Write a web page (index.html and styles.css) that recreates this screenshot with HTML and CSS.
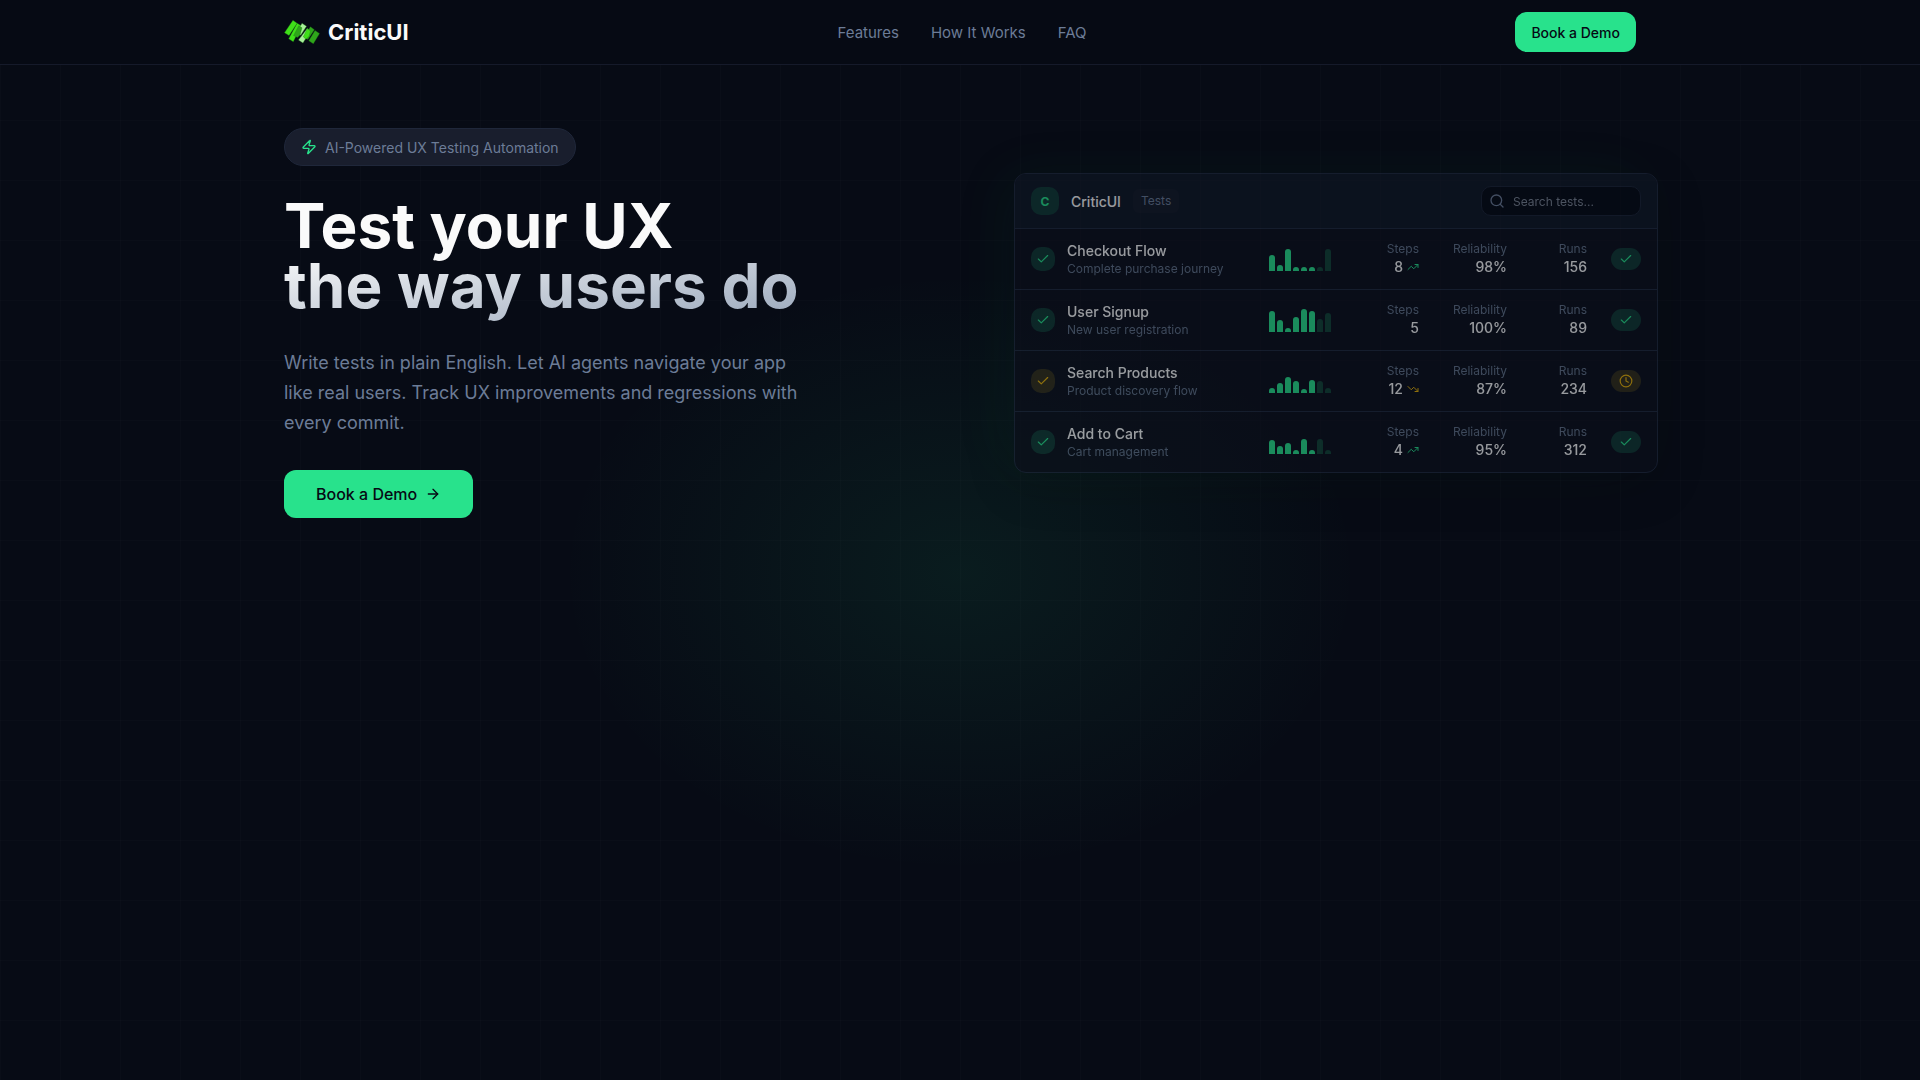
FILE: index.html
```html
<!DOCTYPE html>
<html lang="en">
<head>
<meta charset="utf-8">
<meta name="viewport" content="width=device-width, initial-scale=1">
<title>CriticUI</title>
<link rel="stylesheet" href="styles.css">
</head>
<body>
<svg class="sprite" aria-hidden="true">
  <symbol id="check" viewBox="0 0 24 24"><path d="M20 6 9 17l-5-5"/></symbol>
  <symbol id="clock" viewBox="0 0 24 24"><circle cx="12" cy="12" r="10"/><path d="M12 6v6l4 2"/></symbol>
  <symbol id="up" viewBox="0 0 24 24"><path d="m22 7-8.500 8.500-5-5L2 17"/><path d="M16 7h6v6"/></symbol>
  <symbol id="down" viewBox="0 0 24 24"><path d="m22 17-8.500-8.500-5 5L2 7"/><path d="M16 17h6v-6"/></symbol>
  <symbol id="search" viewBox="0 0 24 24"><circle cx="11" cy="11" r="8"/><path d="m21 21-4.300-4.300"/></symbol>
  <symbol id="arrow" viewBox="0 0 24 24"><path d="M5 12h14"/><path d="m12 5 7 7-7 7"/></symbol>
  <symbol id="zap" viewBox="0 0 24 24"><path d="M4 14a1 1 0 0 1-.78-1.630l9.900-10.200a.5.5 0 0 1 .86.46l-1.920 6.020A1 1 0 0 0 13 10h7a1 1 0 0 1 .78 1.630l-9.900 10.200a.5.5 0 0 1-.86-.46l1.920-6.020A1 1 0 0 0 11 14z"/></symbol>
</svg>

<header class="site-header">
  <div class="container header-inner">
    <a class="brand" href="#">
      <svg class="brand-mark" viewBox="0 0 108 74" aria-hidden="true">
        <g stroke="#1d7a16" stroke-width="1" stroke-linejoin="round">
          <path fill="#3fe019" d="M39 10 52 18 27 67 13 58z"/>
          <path fill="#3fe019" d="M26 1 39 10 14 48 0 39z"/>
          <path fill="#a8f09a" d="M70 26 80 34 57 71 43 62z"/>
          <path fill="#a8f09a" d="M54 10 68 19 50 47 38 38z"/>
          <path fill="#2fa51b" d="M44 18 54 24 48 46 40 54 28 48z"/>
          <path fill="#2fa51b" d="M80 21 92 30 72 60 60 52z"/>
          <path fill="#3fe019" d="M70 26 80 34 76 50 66 59 58 52z"/>
          <path fill="#2fa51b" d="M94 32 108 42 89 73 75 64z"/>
        </g>
      </svg>
      <span>CriticUI</span>
    </a>
    <nav class="nav" aria-label="Main">
      <a href="#features">Features</a>
      <a href="#how">How It Works</a>
      <a href="#faq">FAQ</a>
    </nav>
    <button class="btn btn-small" type="button">Book a Demo</button>
  </div>
</header>

<main class="hero">
  <div class="container hero-grid">
    <section class="intro">
      <p class="pill"><svg class="icon"><use href="#zap"/></svg>AI-Powered UX Testing Automation</p>
      <h1>Test your UX<br><span class="fade">the way users do</span></h1>
      <p class="lead">Write tests in plain English. Let AI agents navigate your app like real users. Track UX improvements and regressions with every commit.</p>
      <button class="btn btn-large" type="button">Book a Demo<svg class="icon"><use href="#arrow"/></svg></button>
    </section>

    <section class="preview" aria-label="Test overview">
      <div class="preview-head">
        <span class="avatar">C</span>
        <strong>CriticUI</strong>
        <span class="tag">Tests</span>
        <label class="search">
          <svg class="icon" aria-hidden="true"><use href="#search"/></svg>
          <input type="text" placeholder="Search tests..." aria-label="Search tests">
        </label>
      </div>
      <ul class="tests">
        <li class="test">
          <div class="name"><span class="state"><svg class="icon"><use href="#check"/></svg></span><div><h2>Checkout Flow</h2><p>Complete purchase journey</p></div></div>
          <div class="spark"><i style="height:16px"></i><i style="height:6px"></i><i style="height:22px"></i><i style="height:4px"></i><i style="height:4px"></i><i style="height:4px"></i><i style="height:4px"></i><i style="height:22px"></i></div>
          <dl><dt>Steps</dt><dd>8<svg class="icon trend"><use href="#up"/></svg></dd></dl>
          <dl><dt>Reliability</dt><dd>98%</dd></dl>
          <dl><dt>Runs</dt><dd>156</dd></dl>
          <span class="result"><svg class="icon"><use href="#check"/></svg></span>
        </li>
        <li class="test">
          <div class="name"><span class="state"><svg class="icon"><use href="#check"/></svg></span><div><h2>User Signup</h2><p>New user registration</p></div></div>
          <div class="spark"><i style="height:21px"></i><i style="height:12px"></i><i style="height:4px"></i><i style="height:15px"></i><i style="height:23px"></i><i style="height:21px"></i><i style="height:13px"></i><i style="height:19px"></i></div>
          <dl><dt>Steps</dt><dd>5</dd></dl>
          <dl><dt>Reliability</dt><dd>100%</dd></dl>
          <dl><dt>Runs</dt><dd>89</dd></dl>
          <span class="result"><svg class="icon"><use href="#check"/></svg></span>
        </li>
        <li class="test warn">
          <div class="name"><span class="state"><svg class="icon"><use href="#check"/></svg></span><div><h2>Search Products</h2><p>Product discovery flow</p></div></div>
          <div class="spark"><i style="height:5px"></i><i style="height:10px"></i><i style="height:16px"></i><i style="height:12px"></i><i style="height:4px"></i><i style="height:13px"></i><i style="height:12px"></i><i style="height:5px"></i></div>
          <dl><dt>Steps</dt><dd>12<svg class="icon trend"><use href="#down"/></svg></dd></dl>
          <dl><dt>Reliability</dt><dd>87%</dd></dl>
          <dl><dt>Runs</dt><dd>234</dd></dl>
          <span class="result"><svg class="icon"><use href="#clock"/></svg></span>
        </li>
        <li class="test">
          <div class="name"><span class="state"><svg class="icon"><use href="#check"/></svg></span><div><h2>Add to Cart</h2><p>Cart management</p></div></div>
          <div class="spark"><i style="height:14px"></i><i style="height:8px"></i><i style="height:11px"></i><i style="height:4px"></i><i style="height:15px"></i><i style="height:4px"></i><i style="height:15px"></i><i style="height:4px"></i></div>
          <dl><dt>Steps</dt><dd>4<svg class="icon trend"><use href="#up"/></svg></dd></dl>
          <dl><dt>Reliability</dt><dd>95%</dd></dl>
          <dl><dt>Runs</dt><dd>312</dd></dl>
          <span class="result"><svg class="icon"><use href="#check"/></svg></span>
        </li>
      </ul>
    </section>
  </div>
</main>
</body>
</html>
```
FILE: styles.css
```css
:root {
  --bg: #060a14;
  --green: #28e28c;
  --amber: #eab308;
  --muted: #6c7c97;
  --line: #151a2a;
}

* { box-sizing: border-box; margin: 0; padding: 0; }

body {
  min-height: 100vh;
  display: flex;
  flex-direction: column;
  background: var(--bg);
  color: #fafafa;
  font-family: Inter, "Open Sans", sans-serif;
}

a { color: inherit; text-decoration: none; }
button, input { font: inherit; }

.sprite { display: none; }

.icon {
  width: 16px;
  height: 16px;
  flex: none;
  fill: none;
  stroke: currentColor;
  stroke-width: 2;
  stroke-linecap: round;
  stroke-linejoin: round;
}

.container {
  width: 100%;
  max-width: 1400px;
  margin: 0 auto;
  padding: 0 24px;
}

.site-header { border-bottom: 1px solid var(--line); }

.header-inner {
  display: flex;
  align-items: center;
  justify-content: space-between;
  height: 64px;
}

.brand {
  display: flex;
  align-items: center;
  gap: 8px;
  font-size: 22px;
  line-height: 28px;
  font-weight: 700;
}

.brand-mark { width: 36px; height: 24px; }

.nav { display: flex; gap: 32px; color: var(--muted); font-size: 15px; }

.btn {
  display: inline-flex;
  align-items: center;
  justify-content: center;
  gap: 8px;
  border: 0;
  border-radius: 12px;
  background: var(--green);
  color: #060a14;
  cursor: pointer;
}

.btn-small { height: 40px; padding: 0 16px; font-size: 14px; font-weight: 500; }
.btn-large { height: 48px; padding: 0 32px; font-size: 16px; font-weight: 500; }

.hero {
  flex: 1;
  padding: 63px 0;
  background:
    radial-gradient(ellipse 400px 300px at 50% 50%, rgba(40, 226, 140, 0.08), transparent),
    linear-gradient(to right, rgba(255, 255, 255, 0.012) 1px, transparent 1px) 0 0 / 60px 60px,
    linear-gradient(to bottom, rgba(255, 255, 255, 0.012) 1px, transparent 1px) 0 55px / 60px 60px,
    #070b15;
}

.hero-grid {
  display: grid;
  grid-template-columns: 1fr 1fr;
  gap: 64px;
  align-items: center;
}

.pill {
  display: flex;
  align-items: center;
  gap: 8px;
  width: fit-content;
  height: 38px;
  padding: 0 16px;
  border: 1px solid #1f273a;
  border-radius: 20px;
  background: #191e2d;
  color: var(--muted);
  font-size: 14px;
}

.pill .icon { color: var(--green); }

h1 { margin-top: 30px; font-size: 62px; line-height: 60px; font-weight: 700; }

.fade {
  padding-bottom: 8px;
  background: linear-gradient(to bottom right, #fafafa, #94a3b8);
  background-clip: text;
  color: transparent;
}

.lead {
  max-width: 528px;
  margin: 32px 0;
  color: var(--muted);
  font-size: 18px;
  line-height: 30px;
}

.intro .btn { display: flex; }

.preview {
  margin: 0 -22px 0 22px;
  border: 1px solid #202a3f;
  border-radius: 12px;
  background: #0c101c;
  box-shadow: 0 12px 50px rgba(0, 0, 0, 0.3), -16px -4px 60px rgba(40, 226, 140, 0.08);
  opacity: 0.6;
  overflow: hidden;
}

.preview-head {
  display: flex;
  align-items: center;
  gap: 12px;
  height: 55px;
  padding: 0 16px;
  border-bottom: 1px solid #202a3f;
  background: #101826;
  font-size: 14px;
}

.preview-head strong { font-weight: 500; }

.avatar {
  display: grid;
  place-items: center;
  width: 28px;
  height: 28px;
  border-radius: 10px;
  background: #123b36;
  color: var(--green);
  font-size: 12px;
  font-weight: 700;
}

.tag {
  padding: 4px 8px;
  border-radius: 6px;
  background: #151b29;
  color: var(--muted);
  font-size: 12px;
  line-height: 16px;
}

.search {
  display: flex;
  align-items: center;
  gap: 8px;
  width: 160px;
  height: 30px;
  margin-left: auto;
  padding: 0 7px;
  border: 1px solid #1c2436;
  border-radius: 10px;
  background: #060a14;
  color: var(--muted);
  font-size: 12px;
}

.search input { width: 100%; min-width: 0; border: 0; outline: 0; background: none; color: #fafafa; }
.search input::placeholder { color: #7c8594; }

.tests { list-style: none; }

.test {
  display: grid;
  grid-template-columns: 1fr 64px 64px 64px 56px 30px;
  gap: 24px;
  align-items: center;
  height: 61px;
  padding: 0 16px;
  border-bottom: 1px solid #202a3f;
  --tone: var(--green);
  --tone-bg: #113a34;
}

.test:last-child { height: 60px; border-bottom: 0; }
.warn { --tone: var(--amber); --tone-bg: #34301c; }

.name { display: flex; align-items: center; gap: 12px; }

.state, .result {
  display: grid;
  place-items: center;
  width: 24px;
  height: 24px;
  border-radius: 10px;
  background: var(--tone-bg);
  color: var(--tone);
}

.state .icon, .result .icon { width: 14px; height: 14px; }
.result { width: 30px; height: 22px; border-radius: 11px; }

h2, dd { font-size: 14px; line-height: 20px; font-weight: 500; }
.name p, dt { color: #64748b; font-size: 12px; line-height: 16px; }

.spark { display: flex; align-items: flex-end; justify-content: flex-end; gap: 2px; height: 24px; }
.spark i { width: 6px; border-radius: 3px 3px 0 0; background: var(--green); }
.spark i:nth-last-child(-n+2) { opacity: 0.25; }

dl { text-align: right; }
dd { display: flex; align-items: center; justify-content: flex-end; gap: 4px; }
.trend { width: 12px; height: 12px; color: var(--tone); }
```
